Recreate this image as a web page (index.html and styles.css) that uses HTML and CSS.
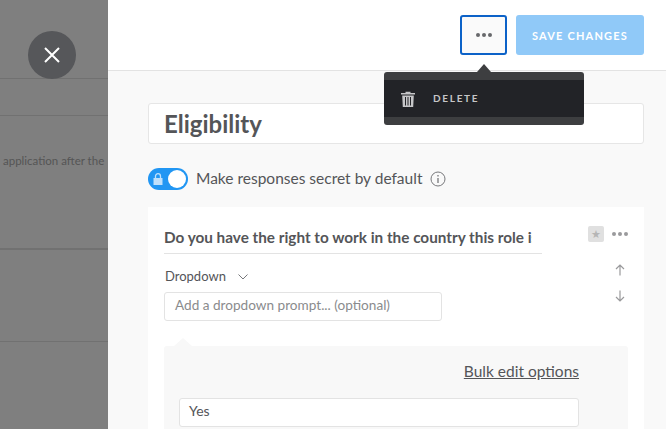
FILE: index.html
```html
<!DOCTYPE html>
<html lang="en">
<head>
  <meta charset="UTF-8">
  <meta name="viewport" content="width=device-width, initial-scale=1.0">
  <title>Edit Form</title>
  <link rel="stylesheet" href="styles.css">
</head>
<body>
  <div class="backdrop">
    <div class="row row-1"></div>
    <div class="row row-2"></div>
    <div class="row row-3"><span class="row-text">application after the</span></div>
    <div class="row row-4"></div>
    <button class="close-btn" type="button" aria-label="Close">
      <svg width="18" height="18" viewBox="0 0 18 18"><path d="M2 2 L16 16 M16 2 L2 16" stroke="#fff" stroke-width="2" fill="none"/></svg>
    </button>
  </div>
  <div class="panel">
    <header class="topbar">
      <button class="more-btn" type="button" aria-label="More">
        <span class="dot"></span><span class="dot"></span><span class="dot"></span>
      </button>
      <button class="save-btn" type="button">SAVE CHANGES</button>
      <div class="menu">
        <div class="menu-item">
          <svg width="14" height="16" viewBox="0 0 14 16"><path d="M4.500 2 V0.800 H9.500 V2 H14 V3.600 H0 V2 Z M1.200 4.500 H12.800 L12.200 16 H1.800 Z" fill="#c6c6c8"/><path d="M4.500 6 V14.500 M7 6 V14.500 M9.500 6 V14.500" stroke="#222327" stroke-width="1" fill="none"/></svg>
          <span class="menu-label">DELETE</span>
        </div>
      </div>
    </header>
    <main class="content">
      <div class="title-box">Eligibility</div>
      <div class="secret-row">
        <span class="toggle">
          <svg width="10" height="12" viewBox="0 0 10 12"><path d="M2.500 5 V3.200 a2.500 2.500 0 0 1 5 0 V5" stroke="#bfe0fb" stroke-width="1.300" fill="none"/><rect x="0.500" y="5" width="9" height="7" fill="#bfe0fb"/></svg>
          <span class="thumb"></span>
        </span>
        <span class="secret-label">Make responses secret by default</span>
        <svg class="info" width="16" height="16" viewBox="0 0 16 16"><circle cx="8" cy="8" r="7" stroke="#77787b" fill="none"/><path d="M8 7 V12 M8 4 V5.500" stroke="#77787b" stroke-width="1.300" fill="none"/></svg>
      </div>
      <section class="card">
        <div class="card-main">
          <div class="question-wrap">
            <div class="question-clip">
              <div class="question">Do you have the right to work in the country this role is in?</div>
            </div>
          </div>
          <div class="type-row">
            <span class="type-label">Dropdown</span>
            <svg width="10" height="6" viewBox="0 0 10 6"><path d="M0.500 0.500 L5 5 L9.500 0.500" stroke="#77787b" fill="none"/></svg>
          </div>
          <div class="prompt-box">Add a dropdown prompt... (optional)</div>
        </div>
        <div class="card-tools">
          <div class="tools-top">
            <span class="star">&#9733;</span>
            <span class="mini-dots"><span class="dot"></span><span class="dot"></span><span class="dot"></span></span>
          </div>
          <svg class="arrow-up" width="10" height="12" viewBox="0 0 10 12"><path d="M5 11.500 V1 M1 5 L5 1 L9 5" stroke="#9a9a9c" stroke-width="1.200" fill="none"/></svg>
          <svg class="arrow-down" width="10" height="12" viewBox="0 0 10 12"><path d="M5 0.500 V11 M1 7 L5 11 L9 7" stroke="#9a9a9c" stroke-width="1.200" fill="none"/></svg>
        </div>
        <div class="options">
          <a class="bulk-link" href="#">Bulk edit options</a>
          <div class="option-box">Yes</div>
        </div>
      </section>
    </main>
  </div>
</body>
</html>
```

FILE: styles.css
```css
* {
  box-sizing: border-box;
}
html, body {
  height: 100%;
}
body {
  margin: 0;
  display: flex;
  height: 429px;
  overflow: hidden;
  font-family: 'Lato', 'Open Sans', sans-serif;
  color: #545558;
  background: #f9f9f9;
}
.dot {
  display: block;
  width: 4px;
  height: 4px;
  border-radius: 50%;
  background: #67686b;
}

/* dimmed page behind the panel */
.backdrop {
  position: relative;
  width: 108px;
  flex: none;
  background: #7f7f7f;
  overflow: hidden;
}
.row {
  border-bottom: 1px solid #717171;
}
.row-1 {
  height: 79px;
}
.row-2 {
  height: 37px;
}
.row-3 {
  height: 134px;
  padding-top: 37px;
  border-bottom-width: 2px;
  white-space: nowrap;
}
.row-4 {
  height: 92px;
}
.row-text {
  display: block;
  margin-left: 3px;
  font-size: 11.500px;
  line-height: 16px;
  color: #555;
}
.close-btn {
  position: absolute;
  left: 28px;
  top: 31px;
  width: 48px;
  height: 48px;
  border: none;
  border-radius: 50%;
  background: #56575a;
  display: flex;
  align-items: center;
  justify-content: center;
  padding: 0;
}

.panel {
  flex: 1;
  min-width: 0;
}
.topbar {
  position: relative;
  height: 71px;
  background: #fff;
  border-bottom: 1px solid #e3e3e3;
  display: flex;
  justify-content: flex-end;
  gap: 9px;
  padding: 15px 22px 0 0;
}
.more-btn {
  width: 47px;
  height: 40px;
  padding: 0;
  background: #fafafa;
  border: 2px solid #0c62c8;
  border-radius: 3px;
  display: flex;
  align-items: center;
  justify-content: center;
  gap: 2px;
}
.save-btn {
  width: 128px;
  height: 40px;
  padding: 0;
  border: none;
  border-radius: 3px;
  background: #90c9f8;
  color: #fff;
  font-family: inherit;
  font-size: 11px;
  font-weight: 700;
  letter-spacing: 1.200px;
}

/* popup under the more button */
.menu {
  position: absolute;
  left: 276px;
  top: 72px;
  width: 200px;
  padding: 8px 0;
  background: #3d3e40;
  border-radius: 3px;
  z-index: 2;
}
.menu::before {
  content: "";
  position: absolute;
  left: 93px;
  top: -8px;
  border-left: 7px solid transparent;
  border-right: 7px solid transparent;
  border-bottom: 8px solid #3d3e40;
}
.menu-item {
  height: 37px;
  background: #222327;
  display: flex;
  align-items: center;
  gap: 18px;
  padding-left: 17px;
  color: #c6c6c8;
  font-size: 10px;
  font-weight: 700;
  letter-spacing: 1.700px;
}
.menu-label {
  margin-top: -2px;
}

.content {
  padding: 32px 22px 0 40px;
}
.title-box {
  height: 41px;
  padding-left: 15px;
  background: #fff;
  border: 1px solid #e6e6e6;
  border-radius: 3px;
  font-size: 24px;
  font-weight: 700;
  line-height: 39px;
  white-space: nowrap;
}
.secret-row {
  display: flex;
  align-items: center;
  height: 22px;
  margin-top: 24px;
  font-size: 15.500px;
}
.secret-label {
  margin-top: -2px;
}
.toggle {
  width: 40px;
  height: 22px;
  margin-right: 8px;
  padding: 0 2px 0 5px;
  background: #2196f3;
  border-radius: 11px;
  display: flex;
  align-items: center;
  justify-content: space-between;
}
.thumb {
  width: 18px;
  height: 18px;
  border-radius: 50%;
  background: #fff;
}
.info {
  margin-left: 8px;
}

.card {
  display: grid;
  grid-template-columns: 1fr 56px;
  margin-top: 17px;
  padding: 16px 16px 0;
  height: 240px;
  background: #fff;
}
.card-main {
  min-width: 0;
}
.question-wrap {
  width: 378px;
  height: 31px;
  border-bottom: 1px solid #e3e3e3;
}
.question-clip {
  width: 368px;
  overflow: hidden;
}
.question {
  font-size: 15.300px;
  font-weight: 700;
  line-height: 29px;
  white-space: nowrap;
}
.type-row {
  display: flex;
  align-items: center;
  gap: 12px;
  height: 20px;
  margin-top: 13px;
  padding-left: 1px;
  font-size: 13px;
}
.type-label {
  margin-top: -2px;
}
.prompt-box {
  width: 278px;
  height: 29px;
  margin-top: 5px;
  padding-left: 10px;
  border: 1px solid #e3e3e3;
  border-radius: 3px;
  color: #8a8b8d;
  font-size: 13.600px;
  line-height: 25px;
}
.card-tools {
  display: flex;
  flex-direction: column;
  align-items: flex-end;
  padding-top: 3px;
}
.tools-top {
  display: flex;
  align-items: center;
  gap: 8px;
}
.star {
  width: 16px;
  height: 16px;
  border-radius: 2px;
  background: #e0e0e0;
  color: #b5b5b5;
  font-size: 11px;
  line-height: 16px;
  text-align: center;
}
.mini-dots {
  display: flex;
  gap: 2px;
}
.mini-dots .dot {
  background: #9a9a9c;
}
.arrow-up {
  margin: 22px 3px 0 0;
}
.arrow-down {
  margin: 14px 3px 0 0;
}

/* grey box with the dropdown's choices */
.options {
  position: relative;
  grid-column: 1 / 3;
  height: 100px;
  margin-top: 24px;
  padding: 15px 49px 0 15px;
  background: #f8f8f8;
  border-radius: 3px;
  display: flex;
  flex-direction: column;
  align-items: flex-end;
}
.options::before {
  content: "";
  position: absolute;
  left: 10px;
  top: -8px;
  border-left: 9px solid transparent;
  border-right: 9px solid transparent;
  border-bottom: 8px solid #f8f8f8;
}
.bulk-link {
  color: #545558;
  font-size: 15.500px;
  line-height: 20px;
}
.option-box {
  width: 100%;
  height: 29px;
  margin-top: 17px;
  padding-left: 9px;
  background: #fff;
  border: 1px solid #e3e3e3;
  border-radius: 3px;
  font-size: 14px;
  line-height: 24px;
}
```
